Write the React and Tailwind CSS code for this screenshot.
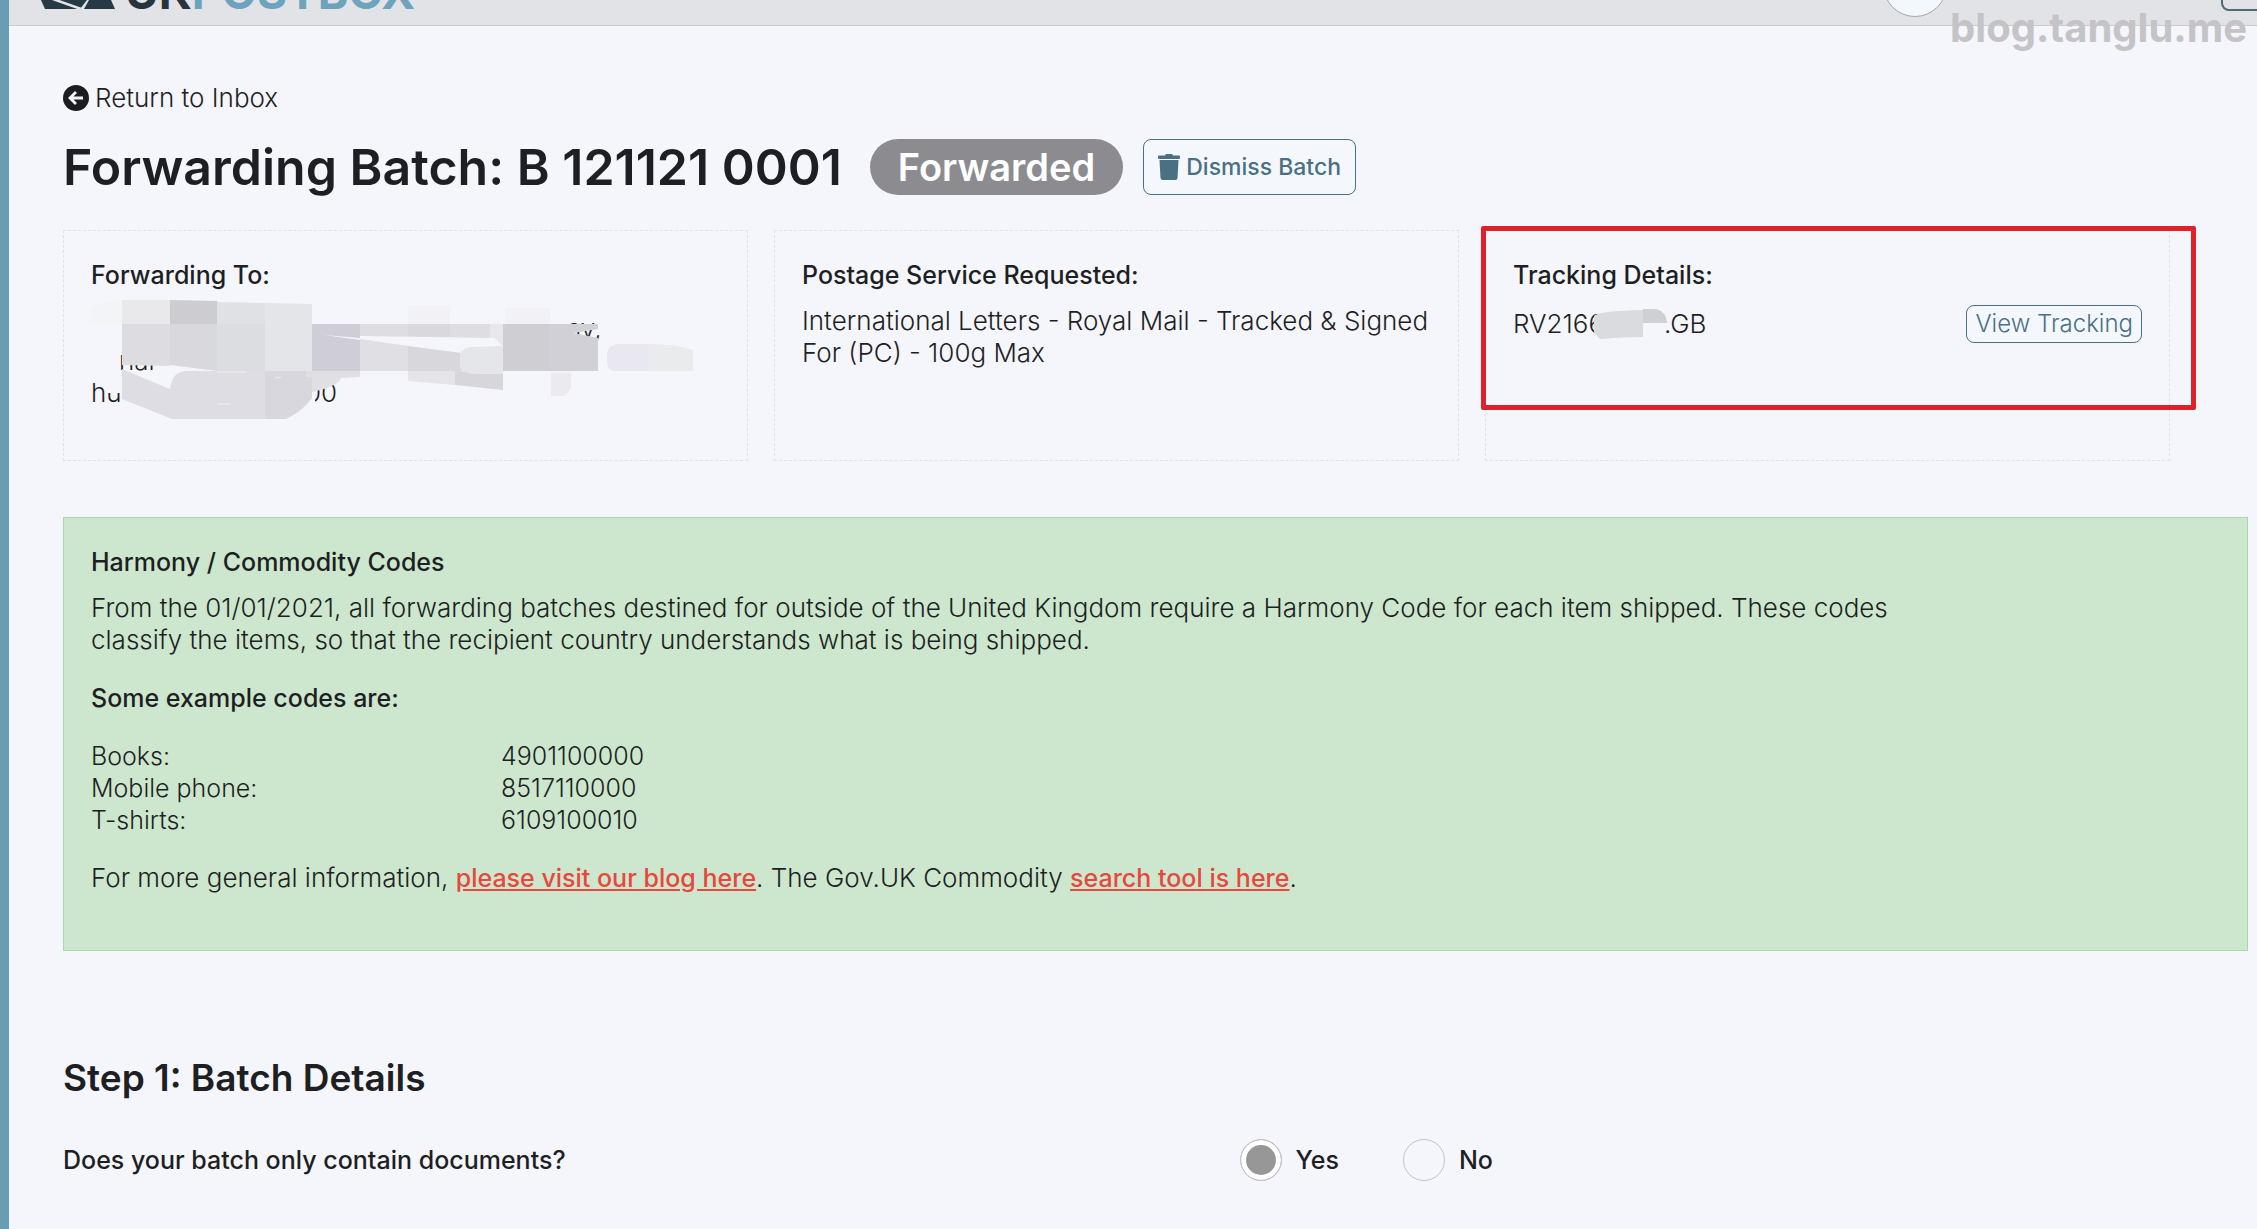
import React, { useState } from 'react';

const exampleCodes = [
  { item: 'Books:', code: '4901100000' },
  { item: 'Mobile phone:', code: '8517110000' },
  { item: 'T-shirts:', code: '6109100010' },
];

const Logo = () => (
  <a href="#" aria-label="UK Postbox" className="flex items-end shrink-0 ml-8 mb-2.5">
    <svg className="w-[74px] h-10 mb-1.5 mr-2.5" viewBox="0 0 74 40">
      <path d="M0 31h46l-7 9H4z" fill="#253a45" />
      <path d="M48 31h22l4 9H43z" fill="#253a45" />
      <path d="M12 30l28 10" stroke="#e3e4e8" strokeWidth="2.5" />
    </svg>
    <span className="text-[46px] leading-[46px] font-bold text-[#25343d]">
      UK<span className="text-[#6fa3bd]">POSTBOX</span>
    </span>
  </a>
);

const Header = () => (
  <header className="h-[26px] flex items-end overflow-hidden bg-[#e2e3e7] border-b border-[#cbccd0]">
    <Logo />
    <div className="size-16 shrink-0 ml-auto mb-2 mr-[274px] rounded-full bg-[#f3f8ff] border border-[#a3a8ad]" />
    <button type="button" aria-label="Menu" className="w-16 h-12 shrink-0 mb-3.5 -mr-7 rounded-lg border-2 border-[#506a77]" />
  </header>
);

const BackIcon = () => (
  <svg className="size-[26px]" viewBox="0 0 26 26" fill="none">
    <circle cx="13" cy="13" r="13" fill="#1c1d21" />
    <path d="M13 7l-6 6 6 6M7.500 13H20" stroke="#f5f5fc" strokeWidth="2.800" />
  </svg>
);

const TrashIcon = () => (
  <svg className="w-[22px] h-[26px]" viewBox="0 0 22 26" fill="#4b7084">
    <path d="M7 1.500L8 0h6l1 1.500h6q1 0 1 1V4q0 1-1 1H1Q0 5 0 4V2.500q0-1 1-1z" />
    <path d="M1.500 6h19l-1 18q-.2 2-2.200 2H4.700q-2 0-2.200-2z" />
  </svg>
);

// pixelated blocks that hide the postal address
const AddressMask = () => (
  <svg className="absolute left-0 top-0 w-[684px] h-[231px]" viewBox="64 230 684 231" aria-hidden="true">
    <path d="M88 323q0-22 34-24v24z" fill="#f3f4f5" />
    <path d="M408 305h42v18h-42zM505 307h45v16h-45z" fill="#f2f2f6" />
    <path d="M104 379h18v13h-15z" fill="#f5f5fc" />
    <path d="M122 299h48v24h-48z" fill="#e9e9ec" />
    <path d="M170 299l47 1v23h-47z" fill="#cdccd1" />
    <path d="M217 301l48 1v21h-48z" fill="#e0e1e4" />
    <path d="M265 302l47 1v67h-47z" fill="#e4e5e9" />
    <path d="M122 323h48v42l-48-1z" fill="#dddde1" />
    <path d="M170 323h47v47l-47-6z" fill="#d9d8dd" />
    <path d="M217 323h48v47h-48z" fill="#dcdde0" />
    <path d="M122 368l48 20q2-18 17-18h125v48H172l-50-20z" fill="#dedde3" />
    <path d="M265 370h47v28q-8 10-18 14l-9 6h-20z" fill="#d8d7dd" />
    <path d="M306 370h54v6l-19 1q-2 8-29 14l-4 6-2-2z" fill="#e0dfe4" />
    <path d="M290 377l22-1v25q-5 9-15 13l-7 2z" fill="#d8d7dd" />
    <path d="M285 419l13-8q12-9 17-19v27z" fill="#f5f5fc" />
    <path d="M312 323h48v14l-36-3 36 5v31h-48z" fill="#cfced6" />
    <path d="M360 323h130v14l-130-2z" fill="#dedde2" />
    <path d="M408 323h42v13l-42-1z" fill="#d9d8dd" />
    <path d="M490 323h13v22l-9-8h-4z" fill="#e8e8ec" />
    <path d="M360 338l48 7v25h-48z" fill="#e0dfe4" />
    <path d="M408 345l54 7v18h-54z" fill="#d8d8dc" />
    <path d="M408 370h47v14l-47-4z" fill="#e5e4e9" />
    <path d="M455 370l48 2v17l-48-5z" fill="#d7d6dc" />
    <path d="M460 352q4-6 12-6l31-1v28h-30q-13-2-13-8z" fill="#e5e6ea" />
    <path d="M503 323h47v47h-47z" fill="#cfced3" />
    <path d="M550 323h48v5l-25 4 25 5v33h-48z" fill="#d1d0d6" />
    <path d="M551 372h20v15l-6 8h-14z" fill="#ebebef" />
    <path d="M607 352q2-9 12-9h29v27h-35q-6-2-6-10z" fill="#e9e8f1" />
    <path d="M648 343q28 0 45 6v21h-45z" fill="#eaebec" />
    <path d="M217 371h30M275 377l6-1M218 403h12" stroke="#eeeef2" strokeWidth="1" />
  </svg>
);

const NumberMask = () => (
  <svg className="w-[74px] h-8 -ml-2.5 -mr-1 shrink-0" viewBox="0 0 74 32" aria-hidden="true">
    <path d="M0 8q4-5 49-6v27q-20 0-43 2l-6-7z" fill="#d9dbde" />
    <path d="M49 1h13q10 2 11 14H49z" fill="#cfd0d4" />
  </svg>
);

const Card = ({ title, children }) => (
  <section className="relative min-h-[231px] px-[27px] py-7 border border-dashed border-[#e1e1e9]">
    <h2 className="text-[25px] leading-8 font-medium mb-3.5">{title}</h2>
    {children}
  </section>
);

const Radio = ({ label, value, selected, onSelect }) => (
  <label className="flex items-center gap-3.5 text-[25px] leading-8 font-medium">
    <input
      type="radio"
      name="documents"
      checked={selected === value}
      onChange={() => onSelect(value)}
      className="appearance-none size-[42px] rounded-full border border-[#c4c4c8] checked:bg-[#979797] checked:shadow-[inset_0_0_0_5px_white]"
    />
    {label}
  </label>
);

const App = () => {
  const [documentsOnly, setDocumentsOnly] = useState('yes');

  return (
    <div className="relative min-h-screen overflow-x-hidden border-l-[9px] border-[#689eb3] bg-[#f5f5fc] font-['Inter',sans-serif] font-light text-[26px] leading-8 text-[#1e1f23]">
      <Header />
      <span className="absolute top-2 right-2.5 text-[40px] leading-10 font-bold text-[#c4c4c6]">blog.tanglu.me</span>

      <main className="pl-[54px] pr-[9px] pt-14 pb-12">
        <a href="#" className="flex w-fit items-center gap-1.5">
          <BackIcon /> Return to Inbox
        </a>

        <div className="flex items-center mt-[25px]">
          <h1 className="text-[50px] leading-[56px] font-semibold">Forwarding Batch: B 121121 0001</h1>
          <span className="ml-7 px-7 rounded-full bg-[#8c8c90] text-white text-[38px] leading-[56px] font-semibold">Forwarded</span>
          <button type="button" className="flex items-center gap-1.5 h-14 ml-5 px-3.5 rounded-lg border border-[#4b7084] bg-[#f4f8fc] text-[23px] font-medium text-[#4b7084]">
            <TrashIcon /> Dismiss Batch
          </button>
        </div>

        <div className="grid grid-cols-3 gap-[26px] mt-[35px] mr-[78px]">
          <Card title="Forwarding To:">
            <address className="not-italic pt-2">
              <p className="pl-[476px]">ay,</p>
              <p className="flex"><span className="pl-7 w-[350px]">nar</span>l v</p>
              <p className="flex"><span className="w-[214px]">hu</span>00</p>
            </address>
            <AddressMask />
          </Card>
          <Card title="Postage Service Requested:">
            <p>International Letters - Royal Mail - Tracked &amp; Signed For (PC) - 100g Max</p>
          </Card>
          <Card title="Tracking Details:">
            <div className="flex items-center justify-between">
              <span className="flex items-center">RV2166<NumberMask />.GB</span>
              <a href="#" className="px-2 text-2xl leading-9 rounded-lg border border-[#4b7084] bg-[#f4f8fc] text-[#4b7084]">View Tracking</a>
            </div>
            <div className="absolute -left-[5px] -right-[27px] -top-[5px] h-[184px] rounded-xs border-[5px] border-[#df212b]" />
          </Card>
        </div>

        <section className="mt-14 px-[27px] pt-7 pb-14 border border-[#a9d8ae] bg-[#cde7ce]">
          <h2 className="text-[25px] font-medium mb-3.5">Harmony / Commodity Codes</h2>
          <p className="max-w-[85%]">
            From the 01/01/2021, all forwarding batches destined for outside of the United Kingdom require a Harmony Code
            for each item shipped. These codes classify the items, so that the recipient country understands what is being shipped.
          </p>
          <h3 className="text-[25px] font-medium my-[26px]">Some example codes are:</h3>
          <table className="mb-[26px] text-[25px] leading-8">
            <tbody>
              {exampleCodes.map(row => (
                <tr key={row.code}>
                  <th scope="row" className="w-[410px] text-left font-light">{row.item}</th>
                  <td>{row.code}</td>
                </tr>
              ))}
            </tbody>
          </table>
          <p>
            For more general information,{' '}
            <a href="#" className="text-[25px] font-medium text-[#e8483c] underline">please visit our blog here</a>. The Gov.UK Commodity{' '}
            <a href="#" className="text-[25px] font-medium text-[#e8483c] underline">search tool is here</a>.
          </p>
        </section>

        <h2 className="mt-[105px] text-[37px] leading-[44px] font-semibold">Step 1: Batch Details</h2>

        <fieldset className="mt-[39px] grid grid-cols-[7fr_6fr] items-center" aria-labelledby="documents-question">
          <span id="documents-question" className="text-[25px] font-medium">Does your batch only contain documents?</span>
          <div className="flex gap-16">
            <Radio label="Yes" value="yes" selected={documentsOnly} onSelect={setDocumentsOnly} />
            <Radio label="No" value="no" selected={documentsOnly} onSelect={setDocumentsOnly} />
          </div>
        </fieldset>
      </main>
    </div>
  );
};

export default App;
